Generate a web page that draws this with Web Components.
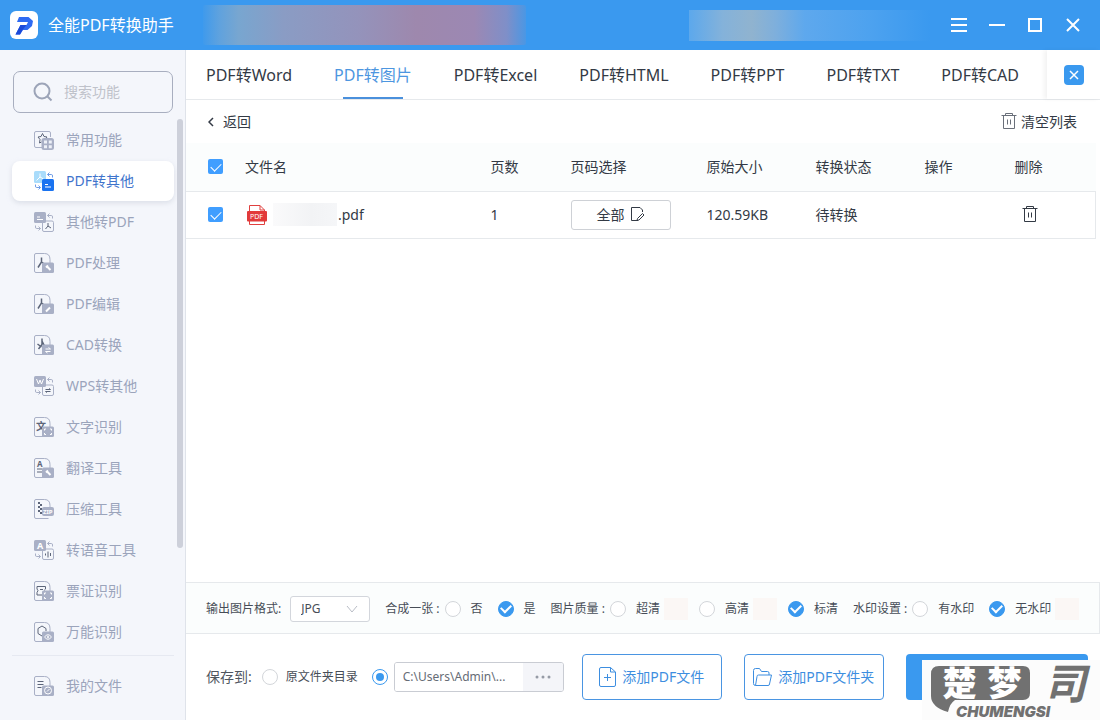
<!DOCTYPE html>
<html lang="zh-CN">
<head>
<meta charset="utf-8">
<title>全能PDF转换助手</title>
<style>
  html, body { margin: 0; height: 100%; }
  body {
    font-family: "Noto Sans", "Noto Sans CJK SC", sans-serif;
    font-size: 14px; line-height: 20px; color: #333a45; background: #fff;
    --blue: #3a99ef; --line: #e6e9ec; --tint: #fbfdfd; --ink: #333a45;
    --muted: #9ba4bb; --badge: #a9b0c6; --dark: #5c6579;
  }
</style>
</head>
<body>
<app-window></app-window>

<script>
const define = (name, html, setup) => {
  const tpl = document.createElement('template');
  tpl.innerHTML = html;
  customElements.define(name, class extends HTMLElement {
    constructor() {
      super();
      this.attachShadow({ mode: 'open' }).append(tpl.content.cloneNode(true));
    }
    connectedCallback() { if (setup) setup(this, this.shadowRoot); }
  });
};

const reset = `
  * { box-sizing: border-box; }
  button, input, select { font: inherit; color: inherit; margin: 0; }
  button { background: none; border: 0; padding: 0; display: inline-flex; align-items: center; justify-content: center; }
  a { color: inherit; text-decoration: none; }
  svg { display: block; }
`;

/* ---------- icons ---------- */
const docBase = '<path class="l" d="M14.5 19.5H2A1.5 1.5 0 0 1 .5 18V2A1.5 1.5 0 0 1 2 .5h8.5q5.500 0 5.500 6V10"/>';
const badge = '<rect class="f" x="8" y="9.500" width="12" height="10.500" rx="1.500"/>';
const acro = '<path class="d" stroke-width="1.500" d="M7.500 4.500v4.500L4 14.500M7.500 9l3 2"/>';
const arrows = '<path class="l" d="M15.500 1.500 13.500 3.500l2 2M13.500 3.500h4q1 0 1 1.500v1.500M4.500 14.500l2 2-2 2M6.500 16.500h-4q-1 0-1-1.500v-1.500"/>';
const outline = '<rect class="l" x="8.500" y="9" width="11" height="10.500" rx="1.500"/>';
const block = '<rect class="f" width="12" height="11" rx="1.500"/>';
const frame = '<path class="w" d="M10.500 13.500V12H12M16 12h1.500v1.500M17.500 16v1.500H16M12 17.500h-1.500V16"/>';
const pen = '<path class="w" stroke-width="2" d="M12 17.500l4-4"/>';
const wrench = '<path class="w" stroke-width="2" d="M12.500 13l4 4M12 14.500l2-2"/>';
const swap = '<path class="w" d="M11.500 14h5l-2-1.500M16.500 16.500h-5l2 1.500"/>';
const shapes = {
  common: '<path class="l" d="M8 17.500H2A1.500 1.500 0 0 1 .5 16V3A1.500 1.500 0 0 1 2 1.500h13A1.500 1.500 0 0 1 16.500 3v4"/><path class="d" d="M8.500 3.500 10 6.500l3 .5-2 2.500M8.500 3.500 7 6.500 4 7l2 2.500-.5 3.500 2-1"/>' +
    '<rect class="f" x="7.500" y="8" width="12.500" height="12" rx="2.500"/><path d="M10 10.500h3v3h-3zM14.800 10.500h3v3h-3zM10 15.200h3v3h-3zM14.800 15.200h3v3h-3z" fill="#eef1f8"/>',
  other: '<rect width="12" height="12" rx="1.500" fill="#a9dcfb"/><path d="M6 2.500v3.500L2.500 9.500M6 6l3.500 2" stroke="#fff" fill="none"/>' +
    '<path d="M15.500 1.500 13.500 3.500l2 2M13.500 3.500h4q1 0 1 1.500v1.500M4.500 14.500l2 2-2 2M6.500 16.500h-4q-1 0-1-1.500v-1.500" fill="none" stroke="#6d9be6"/>' +
    '<rect x="8" y="8" width="12" height="12" rx="1.500" fill="#1a73f0"/><path d="M11 13.500h3M11 16h6" stroke="#fff"/>',
  topdf: block + arrows + outline + '<path class="w" d="M3 5h3M3 7.500h6"/><path class="d" d="M14 11v3l-2.500 3M14 14l3 2"/>',
  process: docBase + acro + badge + wrench,
  edit: docBase + acro + badge + pen,
  cad: docBase + '<path class="d" stroke-width="1.500" d="M8 3.500v6L4.500 14M8 6l2.500 5M3.500 9l4 3"/>' + badge + swap,
  wps: block + arrows + outline + '<path class="w" d="M2.500 3l2 5 1.500-4 1.500 4 2-5"/><path class="d" d="M11.500 13.500h5l-1.500-1M16.500 15.500h-5l1.500 1"/>',
  ocr: docBase + '<text x="2" y="13" font-size="10" font-weight="700" class="t">文</text>' + badge + frame,
  translate: docBase + '<text x="3" y="9" font-size="8" font-weight="700" class="t">A</text><path class="d" d="M3 11h5M3 14h5"/>' + badge + wrench,
  zip: docBase + '<path d="M4 3h2v2H4zM6 5h2v2H6zM4 7h2v2H4zM6 9h2v2H6zM4 11h2v2H4zM6 13h2v2H6z" fill="#5c6579"/>' +
    '<rect class="f" x="8" y="8" width="12" height="9" rx="2"/><text x="9" y="15" font-size="6" font-weight="700" fill="#fff">ZIP</text>',
  voice: block + arrows + outline + '<text x="3" y="9" font-size="9" font-weight="700" fill="#fff">A</text><path class="d" d="M11.500 13.500v2M14 11.500v6M16.500 13v3"/>',
  ticket: docBase + '<path class="d" d="M3 5.500h8.500V8q-1 .5-1 1.500M3 5.500V8q2 1.500 0 3.500V14h5M6 8.500h3"/>' + badge + frame,
  any: docBase + '<path class="d" d="M8 14l-4-2.500v-5L8 4l4 2.500V9"/>' + badge + '<path class="w" d="M10.500 15q3.500-4.500 7 0-3.500 4.500-7 0z"/><circle cx="14" cy="15" r="1" fill="#fff"/>',
  files: docBase + '<path class="d" d="M3.500 5.500h6M3.500 8.500h6M3.500 11.500h4"/>' + badge + '<circle class="w" cx="14" cy="14.500" r="3.500"/><path class="w" d="M13 15.500l2.500-2.500"/>',
};
define('nav-icon', `<style>
  :host { display: block; width: 20px; height: 20px; flex: none; }
  svg { display: block; overflow: visible; fill: none; }
  .l { stroke: var(--badge); } .f { fill: var(--badge); }
  .d { stroke: var(--dark); } .w { stroke: #fff; } .t { fill: var(--dark); }
</style><svg width="20" height="20" viewBox="0 0 20 20" aria-hidden="true"></svg>`,
(el, root) => { root.querySelector('svg').innerHTML = shapes[el.getAttribute('name')]; });

define('trash-icon', `<style>
  :host { display: block; } svg { display: block; fill: none; stroke: currentColor; }
</style><svg width="16" height="17" viewBox="0 0 16 17" aria-hidden="true"><path d="M.5 2.500h15M4.500 2.500v-2h7v2M2.500 2.500v13h11v-13M6.500 6.500v5M9.500 6.500v5"/></svg>`);

/* ---------- title bar ---------- */
define('title-bar', `<style>${reset}
  :host { display: flex; align-items: center; height: 50px; flex: none; padding: 0 8px 0 10px; background: var(--blue); color: #fff; }
  h1 { margin: 0 29px 0 10px; font-size: 16px; line-height: 24px; font-weight: 400; white-space: nowrap; }
  .promo { height: 40px; flex: 0 1 323px; border-radius: 2px; background: linear-gradient(90deg, #3f9aec 0, #5fa2de 5%, #78a6d0 11%, #8a9cc4 25%, #9493bb 48%, #9e88ad 66%, #9c88b3 84%, #7f8fc8 94%, #4a97e4 100%); }
  .account { height: 31px; flex: 0 1 241px; margin: 0 10px 0 auto; background: linear-gradient(90deg, #5ca8ec 0, #84b2da 14%, #90b3cf 26%, #7eafdc 36%, #5ea8ed 48%, #4da2ef 75%, #3a99ef 100%); }
  button { width: 38px; height: 48px; }
  .win svg { fill: none; stroke: #fff; stroke-width: 2; }
</style>
<svg width="28" height="28" viewBox="0 0 28 28" aria-hidden="true">
  <rect width="28" height="28" rx="6" fill="#fff"/>
  <path d="M9 6h9.500L23 10l-1 5-4.500 4H13l-3 4.500H5.500L10.500 14h6l1.500-3H7z" fill="#2f6bf2"/>
  <path d="M10.500 14h6l-4 5L10 23.500H5.500z" fill="#1b49d8"/>
</svg>
<h1>全能PDF转换助手</h1>
<div class="promo"></div>
<div class="account"></div>
<button class="win" aria-label="菜单"><svg width="16" height="14"><path d="M0 1h16M0 7h16M0 13h16"/></svg></button>
<button class="win" aria-label="最小化"><svg width="16" height="14"><path d="M0 7h16"/></svg></button>
<button class="win" aria-label="最大化"><svg width="14" height="14"><path d="M1 1h12v12H1z"/></svg></button>
<button class="win" aria-label="关闭"><svg width="14" height="14"><path d="M1 1l12 12M13 1L1 13"/></svg></button>`);

/* ---------- sidebar ---------- */
define('nav-item', `<style>${reset}
  :host { display: block; color: var(--muted); }
  a { display: flex; align-items: center; gap: 12px; height: 40px; padding-left: 22px; border-radius: 8px; white-space: nowrap; }
  :host([active]) { color: #3f74cc; }
  :host([active]) a { background: #fff; box-shadow: 0 2px 5px #c9cedb99; }
</style><a href="#"><slot name="icon"></slot><slot></slot></a>`);

const navItems = [['common', '常用功能'], ['other', 'PDF转其他'], ['topdf', '其他转PDF'], ['process', 'PDF处理'],
  ['edit', 'PDF编辑'], ['cad', 'CAD转换'], ['wps', 'WPS转其他'], ['ocr', '文字识别'], ['translate', '翻译工具'],
  ['zip', '压缩工具'], ['voice', '转语音工具'], ['ticket', '票证识别'], ['any', '万能识别']];
const navItem = ([icon, text]) =>
  `<nav-item${icon === 'other' ? ' active' : ''}><nav-icon slot="icon" name="${icon}"></nav-icon>${text}</nav-item>`;

define('side-nav', `<style>${reset}
  :host { box-sizing: border-box; width: 186px; flex: none; display: flex; flex-direction: column; background: #f4f6fb; border-right: 1px solid #dfe3ea; }
  .search { display: flex; align-items: center; gap: 11px; height: 42px; margin: 21px 12px 6px 13px; padding: 0 12px 0 19px; border: 1px solid #a8aebf; border-radius: 7px; }
  .search svg { flex: none; }
  .search input { flex: 1; min-width: 0; border: 0; background: none; padding: 0; outline: 0; line-height: 20px; }
  .search input::placeholder { color: #bfc2ca; opacity: 1; }
  .scroll { flex: 1; display: flex; align-items: flex-start; }
  nav { flex: 1; display: flex; flex-direction: column; gap: 1px; padding: 1px 3px 2px 12px; align-self: flex-start; }
  .thumb { width: 6px; height: 80%; margin-right: 2px; border-radius: 3px; background: #cdd0da; }
  .foot { margin: 0 11px 0 12px; padding: 10px 0 14px; border-top: 1px solid #e6e9f1; }
</style>
<label class="search">
  <svg width="20" height="20" viewBox="0 0 20 20" fill="none" stroke="#9ca4b8" stroke-width="2" aria-hidden="true"><circle cx="9" cy="9" r="7.500"/><path d="M14.500 14.500l4 4"/></svg>
  <input type="search" placeholder="搜索功能" aria-label="搜索功能">
</label>
<div class="scroll"><nav>${navItems.map(navItem).join('')}</nav><div class="thumb"></div></div>
<div class="foot">${navItem(['files', '我的文件'])}</div>`);

/* ---------- tabs ---------- */
define('tab-bar', `<style>${reset}
  :host { display: flex; height: 50px; flex: none; border-bottom: 1px solid var(--line); box-sizing: border-box; }
  nav { flex: 1; min-width: 0; display: flex; gap: 42px; padding-left: 20px; overflow: hidden; }
  a { display: flex; flex-direction: column; align-items: center; justify-content: space-between; font-size: 16px; line-height: 24px; padding-top: 13px; white-space: nowrap; }
  a.on { color: #4d96e0; }
  a.on::after { content: ""; width: 60px; height: 2px; background: #4a90dc; }
  .end { width: 53px; flex: none; display: flex; align-items: center; justify-content: center; box-shadow: -3px 0 4px #0000000d; }
  button { width: 20px; height: 20px; border-radius: 4px; background: var(--blue); }
</style>
<nav><a href="#">PDF转Word</a><a href="#" class="on" aria-current="page">PDF转图片</a><a href="#">PDF转Excel</a><a href="#">PDF转HTML</a><a href="#">PDF转PPT</a><a href="#">PDF转TXT</a><a href="#">PDF转CAD</a></nav>
<div class="end"><button aria-label="关闭标签"><svg width="10" height="10" fill="none" stroke="#fff" stroke-width="1.500"><path d="M1 1l8 8M9 1L1 9"/></svg></button></div>`);

/* ---------- list ---------- */
define('list-tools', `<style>${reset}
  :host { display: flex; justify-content: space-between; align-items: center; height: 43px; padding: 0 23px 0 22px; flex: none; }
  button { gap: 4px; } .back { gap: 9px; }
  trash-icon { color: #6a707a; }
</style>
<button class="back"><svg width="6" height="10" fill="none" stroke="currentColor" stroke-width="1.500"><path d="M5 1L1 5l4 4"/></svg>返回</button>
<button><trash-icon></trash-icon>清空列表</button>`);

define('file-table', `<style>${reset}
  :host { display: block; flex: 1; padding-right: 4px; }
  table { width: 100%; border-collapse: collapse; table-layout: fixed; }
  th, td { padding: 0; text-align: left; font-weight: 400; border-bottom: 1px solid var(--line); white-space: nowrap; }
  th { height: 48px; background: var(--tint); } td { height: 47px; }
  tbody tr { border-right: 1px solid var(--line); }
  th:first-child, td:first-child { padding-left: 22px; }
  .c-check { width: 59px; } .c-pages { width: 80px; } .c-range { width: 136px; } .c-size { width: 109px; } .c-op { width: 90px; } .c-del { width: 81px; }
  input { appearance: none; display: grid; place-items: center; width: 15px; height: 15px; border-radius: 2px; background: #409eff; }
  input::before { content: ""; width: 9px; height: 5px; border: solid #fff; border-width: 0 0 1px 1px; transform: translateY(-1px) rotate(-45deg); }
  .file { display: flex; align-items: center; padding-left: 2px; }
  .mask { width: 64px; height: 23px; margin: 0 1px 0 6px; background: linear-gradient(90deg, #fafafb, #f2f3f5 60%, #f5f6f8); }
  .range { width: 100px; height: 30px; border: 1px solid #ced1d6; border-radius: 3px; gap: 5px; }
  .del { width: 30px; height: 30px; }
</style>
<table>
  <thead><tr><th class="c-check"><input type="checkbox" checked aria-label="全选"></th><th>文件名</th><th class="c-pages">页数</th><th class="c-range">页码选择</th><th class="c-size">原始大小</th><th class="c-size">转换状态</th><th class="c-op">操作</th><th class="c-del">删除</th></tr></thead>
  <tbody><tr>
    <td><input type="checkbox" checked aria-label="选择文件"></td>
    <td><div class="file">
      <svg width="20" height="20" viewBox="0 0 20 20" aria-hidden="true"><path d="M2.500 6V.5H13l4.500 4.500v1M2.500 16v3.500h15V16M13 .5V5h4.500" fill="none" stroke="#e0403f"/><rect y="6" width="20" height="10.500" rx="1" fill="#e23a3a"/><text x="3" y="14" font-size="7" fill="#fff">PDF</text></svg>
      <span class="mask"></span>.pdf</div></td>
    <td>1</td>
    <td><button class="range">全部<svg width="15" height="15" fill="none" stroke="currentColor"><path d="M8 13.500H1.500V.5h8.500l2.500 2.500v2M7.500 11.500l5-5 1.500 1.500-5 5-2 .5z"/></svg></button></td>
    <td>120.59KB</td><td>待转换</td><td></td>
    <td><button class="del" aria-label="删除文件"><trash-icon></trash-icon></button></td>
  </tr></tbody>
</table>`);

/* ---------- output options ---------- */
const radioCss = `
  input[type=radio] { appearance: none; flex: none; display: grid; place-items: center; width: 16px; height: 16px; border: 1px solid #d3d6da; border-radius: 50%; background: #fff; }
`;
const choice = (name, text, on, hot) =>
  `<label class="choice"><input type="radio" name="${name}"${on ? ' checked' : ''}><span>${text}</span>${hot ? '<i></i>' : ''}</label>`;

define('output-options', `<style>${reset}${radioCss}
  :host { display: flex; align-items: center; gap: 15px; height: 52px; padding: 1px 0 0 20px; flex: none; box-sizing: border-box; font-size: 12px; line-height: 18px; color: #474d57; background: var(--tint); border: solid var(--line); border-width: 1px 1px 1px 0; white-space: nowrap; }
  .group { display: flex; align-items: center; gap: 15px; }
  .title { margin-right: -10px; } .tight { gap: 11px; } .tight .title { margin-right: -6px; }
  .choice { display: flex; align-items: center; }
  .choice span { margin-left: 10px; }
  .choice i { width: 24px; height: 22px; margin-left: 4px; background: #fbf7f5; }
  input[type=radio]:checked { background: var(--blue); border-color: var(--blue); }
  input[type=radio]:checked::before { content: ""; width: 8px; height: 5px; border: solid #fff; border-width: 0 0 2px 2px; transform: translateY(-1px) rotate(-45deg); }
  .format { display: flex; align-items: center; gap: 9px; }
  .pick { display: grid; }
  .pick > * { grid-area: 1 / 1; }
  .pick svg { justify-self: end; align-self: center; margin-right: 12px; pointer-events: none; }
  select { appearance: none; width: 80px; height: 26px; padding: 0 10px; border: 1px solid #d3d6dc; border-radius: 3px; background: #fff; }
</style>
<div class="format"><label for="fmt">输出图片格式:</label><span class="pick"><select id="fmt"><option>JPG</option><option>PNG</option></select><svg width="12" height="8" fill="none" stroke="#b9bdc6"><path d="M1 1l5 6 5-6"/></svg></span></div>
<div class="group" role="radiogroup"><span class="title">合成一张 :</span>${choice('merge', '否')}${choice('merge', '是', true)}</div>
<div class="group tight" role="radiogroup"><span class="title">图片质量 :</span>${choice('quality', '超清', false, true)}${choice('quality', '高清', false, true)}${choice('quality', '标清', true)}</div>
<div class="group" role="radiogroup"><span class="title">水印设置 :</span>${choice('mark', '有水印')}${choice('mark', '无水印', true, true)}</div>`);

define('save-bar', `<style>${reset}${radioCss}
  :host { display: flex; align-items: center; height: 86px; padding: 0 12px 0 20px; flex: none; white-space: nowrap; }
  .lead { margin-right: 10px; color: #50565f; }
  label { display: flex; align-items: center; gap: 8px; font-size: 12px; margin-right: 14px; color: #474d57; }
  input[type=radio]:checked { border-color: var(--blue); }
  input[type=radio]:checked::before { content: ""; width: 8px; height: 8px; border-radius: 50%; background: var(--blue); }
  .path { display: flex; width: 170px; height: 30px; margin: 0 18px 0 6px; border: 1px solid #c9ccd3; border-radius: 3px; overflow: hidden; }
  .path input { flex: 1; min-width: 0; border: 0; padding: 0 0 0 8px; font-size: 12px; outline: 0; color: #666c76; }
  .path button { width: 40px; background: #f4f5f9; }
  .add { width: 140px; height: 46px; flex: none; margin-right: 22px; border: 1px solid #4a95e2; border-radius: 4px; color: #3d8ee0; gap: 6px; }
  .start { flex: 1; min-width: 80px; height: 46px; border-radius: 4px; background: var(--blue); }
</style>
<span class="lead">保存到:</span>
<label><input type="radio" name="dest">原文件夹目录</label>
<input type="radio" name="dest" checked aria-label="自定义目录">
<span class="path"><input type="text" value="C:\\Users\\Admin\\..." aria-label="保存路径"><button aria-label="浏览"><svg width="16" height="4" fill="#969ba6"><circle cx="2" cy="2" r="1.500"/><circle cx="8" cy="2" r="1.500"/><circle cx="14" cy="2" r="1.500"/></svg></button></span>
<button class="add"><svg width="17" height="20" fill="none" stroke="currentColor"><path d="M11.500.5H2A1.500 1.500 0 0 0 .5 2v16A1.500 1.500 0 0 0 2 19.500h13a1.500 1.500 0 0 0 1.500-1.500V5zM11.500.5V5h5M8.500 7v7M5 10.500h7"/></svg>添加PDF文件</button>
<button class="add"><svg width="19" height="18" fill="none" stroke="currentColor"><path d="M2.500 17.500q-2 0-2-2v-13q0-2 2-2h4l2 3h6q1.500 0 1.500 1.500v2M2.500 17.500l1.500-9q0-1.500 1.500-1.500h13l-2 9q0 1.500-1.500 1.500z"/></svg>添加PDF文件夹</button>
<button class="start" aria-label="开始转换"></button>`);

/* ---------- site mark laid over the corner ---------- */
define('site-mark', `<style>
  :host { position: absolute; right: 0; bottom: 0; width: 178px; height: 60px; background: #fcfcfc; color: #717171; font-family: "Noto Sans CJK SC", sans-serif; font-weight: 900; }
  svg, .name, .end, .latin { position: absolute; white-space: nowrap; }
  svg { left: 9px; top: 6px; }
  .name { left: 15px; top: 6px; width: 90px; display: flex; justify-content: space-around; font-size: 34px; line-height: 32px; color: #fff; }
  .end { left: 122px; top: 0; font-size: 42px; line-height: 42px; font-style: italic; font-weight: 700; }
  .latin { left: 34px; top: 44px; font: italic 900 15px/16px Inter, sans-serif; }
</style>
<svg width="100" height="48" fill="#717171" aria-hidden="true"><path d="M8 0h84q7 0 7 7v20q0 7-7 7H24q-5 3-7 12Q0 41 0 30V8q0-8 8-8z"/></svg>
<div class="name"><span>楚</span><span>梦</span></div><span class="end">司</span><span class="latin">CHUMENGSI</span>`);

define('app-window', `<style>
  :host { display: flex; flex-direction: column; min-height: 100vh; position: relative; overflow: hidden; }
  .body { flex: 1; display: flex; }
  main { flex: 1; min-width: 0; display: flex; flex-direction: column; }
</style>
<title-bar></title-bar>
<div class="body"><side-nav></side-nav>
  <main><tab-bar></tab-bar><list-tools></list-tools><file-table></file-table><output-options></output-options><save-bar></save-bar></main>
</div>
<site-mark></site-mark>`);
</script>
</body>
</html>
